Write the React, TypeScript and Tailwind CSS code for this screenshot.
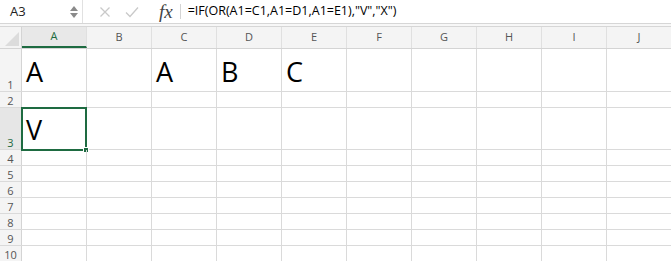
import React from 'react';

const COLS = ['A', 'B', 'C', 'D', 'E', 'F', 'G', 'H', 'I', 'J'];

const ROWS: { n: number; h: string; cells?: Record<string, string> }[] = [
  { n: 1, h: 'h-[43px]', cells: { A: 'A', C: 'A', D: 'B', E: 'C' } },
  { n: 2, h: 'h-[16px]' },
  { n: 3, h: 'h-[42px]', cells: { A: 'V' } },
  { n: 4, h: 'h-[16px]' },
  { n: 5, h: 'h-[16px]' },
  { n: 6, h: 'h-[16px]' },
  { n: 7, h: 'h-[16px]' },
  { n: 8, h: 'h-[16px]' },
  { n: 9, h: 'h-[16px]' },
  { n: 10, h: 'h-[16px]' },
];

const FormulaBar: React.FC = () => (
  <div className="flex h-[24px] items-center bg-white border-b border-[#d6d6d6]">
    <div className="flex h-full w-[83px] items-center justify-between border-r border-[#e1e1e1] pl-[10px] pr-[4px]">
      <span className="text-[13px] text-[#222]">A3</span>
      <div className="flex flex-col items-center gap-[2px]">
        <svg width="8" height="5" viewBox="0 0 8 5"><path d="M4 0L8 5H0Z" fill="#8a8a8a" /></svg>
        <svg width="8" height="5" viewBox="0 0 8 5"><path d="M0 0H8L4 5Z" fill="#8a8a8a" /></svg>
      </div>
    </div>
    <div className="flex items-center pl-[16px]">
      <svg width="12" height="12" viewBox="0 0 12 12" className="mr-[14px]">
        <path d="M1.5 1.5L10.5 10.5M10.5 1.5L1.5 10.5" stroke="#c9c9c9" strokeWidth="1.3" />
      </svg>
      <svg width="14" height="12" viewBox="0 0 14 12" className="mr-[20px]">
        <path d="M1 6.5L5 10.5L13 1.5" stroke="#c9c9c9" strokeWidth="1.3" fill="none" />
      </svg>
      <span className="text-[19px] italic text-[#444] leading-none font-['Liberation_Serif',serif]">
        fx
      </span>
      <div className="ml-[7px] h-[15px] w-px bg-[#d4d4d4]" />
      <span className="ml-[7px] text-[12.5px] text-black whitespace-nowrap">
        =IF(OR(A1=C1,A1=D1,A1=E1),"V","X")
      </span>
    </div>
  </div>
);

const App: React.FC = () => {
  return (
    <div className="w-[671px] h-[261px] overflow-hidden bg-white font-['Open_Sans',sans-serif]">
      <FormulaBar />
      <div className="h-[3px] border-b border-[#d6d6d6] bg-[#f7f7f7]" />

      {/* column headers */}
      <div className="flex h-[22px] bg-[#f4f4f4] border-b border-[#d4d4d4]">
        <div className="relative w-[22px] shrink-0 border-r border-[#d4d4d4]">
          <svg width="14" height="14" viewBox="0 0 14 14" className="absolute bottom-[2px] right-[2px]">
            <path d="M14 0V14H0Z" fill="#dcdcdc" />
          </svg>
        </div>
        {COLS.map((c) => (
          <div
            key={c}
            className={`flex w-[65px] shrink-0 items-center justify-center border-r border-[#e0e0e0] text-[11px] ${
              c === 'A' ? 'text-[#1e6b41] bg-[#e8e8e8] border-b-2 border-b-[#1e6b41]' : 'text-[#555]'
            }`}
          >
            {c}
          </div>
        ))}
      </div>

      {/* rows */}
      {ROWS.map((r) => (
        <div key={r.n} className={`flex ${r.h} border-b border-[#dadada]`}>
          <div
            className={`flex w-[22px] shrink-0 items-end justify-center border-r border-[#d4d4d4] pb-[1px] text-[11px] leading-none ${
              r.n === 3 ? 'bg-[#e6e6e6] text-[#1e6b41]' : 'bg-[#f4f4f4] text-[#555]'
            }`}
          >
            {r.n}
          </div>
          {COLS.map((c) => {
            const selected = r.n === 3 && c === 'A';
            return (
              <div
                key={c}
                className="relative flex w-[65px] shrink-0 items-end border-r border-[#dadada] pl-[4px] pb-[6px] text-[27px] leading-none text-black"
              >
                {r.cells?.[c]}
                {selected && (
                  <div className="absolute -left-[1px] -top-[1px] -right-[1px] -bottom-[2px] border-2 border-[#1e6b41]">
                    <div className="absolute -right-[4px] -bottom-[4px] h-[6px] w-[6px] bg-[#1e6b41] border border-white" />
                  </div>
                )}
              </div>
            );
          })}
        </div>
      ))}
    </div>
  );
};

export default App;
